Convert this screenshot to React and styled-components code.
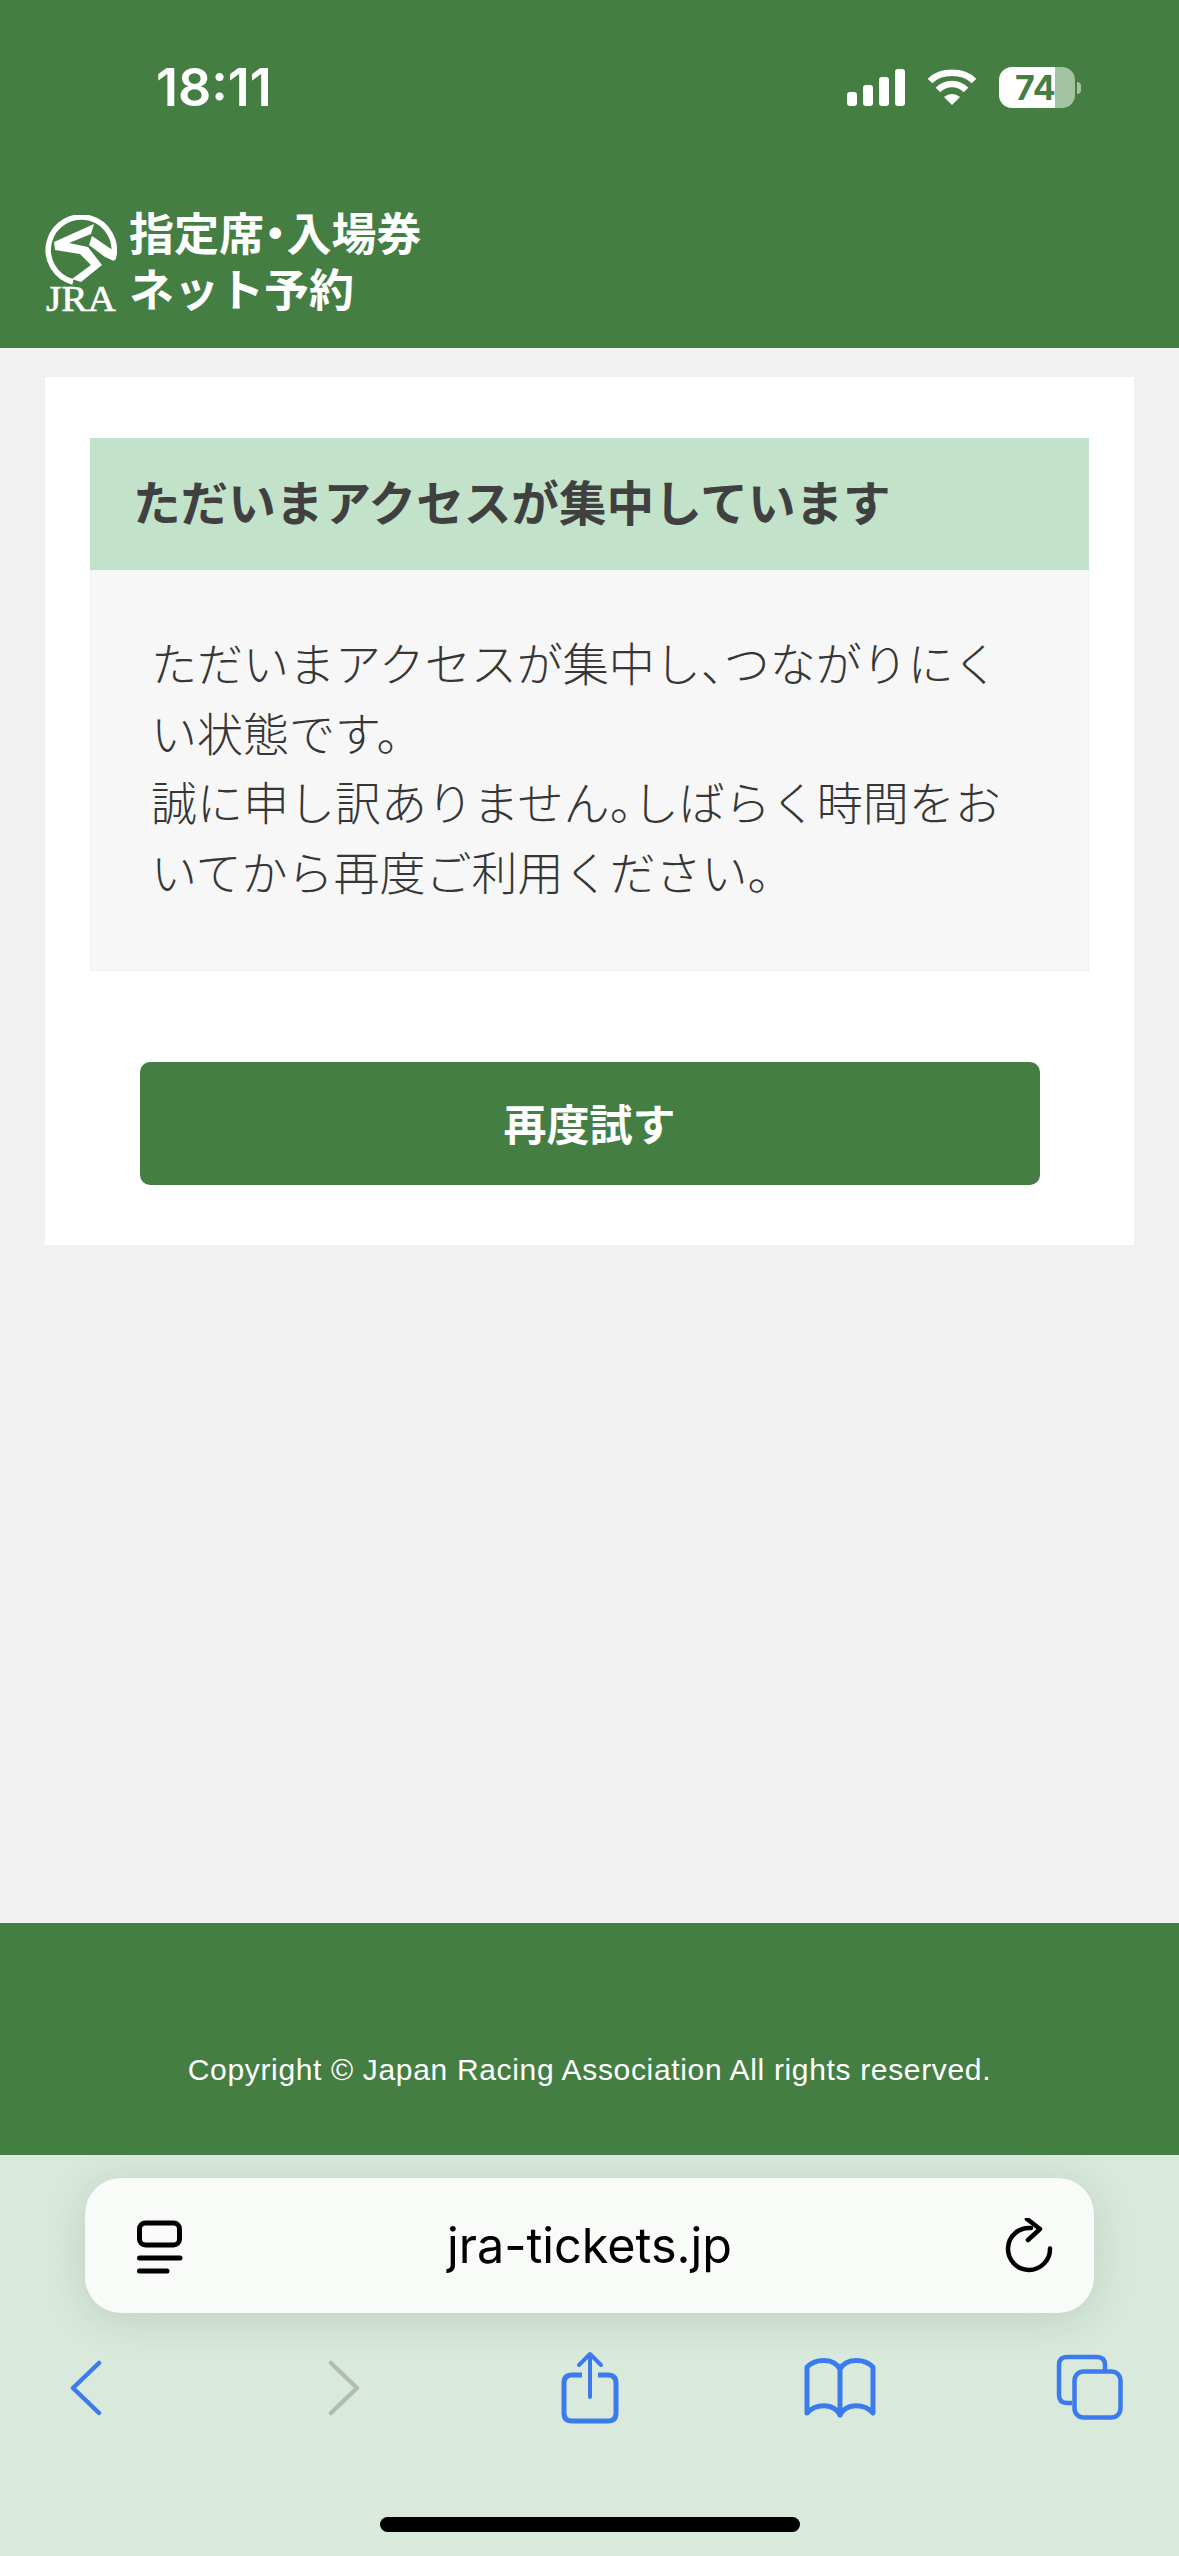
import styled, { createGlobalStyle } from 'styled-components';

const GlobalStyle = createGlobalStyle`
    html, body {
        margin: 0;
        padding: 0;
        background: #f1f1f1;
    }
    * {
        box-sizing: border-box;
    }
`;

const JP = `"Noto Sans CJK JP", "Noto Sans", sans-serif`;
const GREEN = '#447e43';
const BLUE = '#3b7bee';

const Logo = () => (
    <LogoBox width="72" height="104" viewBox="0 0 72 104">
        <path d="M68 44 A33 33 0 1 0 28 67" fill="none" stroke="#fff" strokeWidth="5.5" />
        <path d="M49 9 L9 27 L10 35 L35 39 L46 50 L27 64 L36 67 L57 50 L43 32 L24 28 L46 19 Z" fill="#fff" />
        <path d="M47 21 L72 38 L69 46 L60 42 L44 30 Z" fill="#fff" />
        <text x="1" y="96" fill="#fff" fontFamily="Liberation Serif" fontSize="35" textLength="70" lengthAdjust="spacingAndGlyphs" stroke="#fff" strokeWidth="0.6">JRA</text>
    </LogoBox>
);

const SignalIcon = () => (
    <svg width="58" height="37" viewBox="0 0 58 37" fill="#fff">
        <rect x="0" y="23" width="10" height="14" rx="3" />
        <rect x="16" y="16" width="10" height="21" rx="3" />
        <rect x="32" y="8" width="10" height="29" rx="3" />
        <rect x="48" y="0" width="10" height="37" rx="3" />
    </svg>
);

const WifiIcon = () => (
    <svg width="50" height="37" viewBox="0 0 50 37" fill="none" stroke="#fff" strokeWidth="6.5">
        <path d="M3 12 C14 1 36 1 47 12" />
        <path d="M11 21 C19 13 31 13 39 21" />
        <path d="M17 28 C22 24 28 24 33 28 L25 36 Z" fill="#fff" stroke="none" />
    </svg>
);

const TabsMini = () => (
    <svg width="48" height="56" viewBox="0 0 48 56" fill="none" stroke="#000" strokeWidth="5">
        <rect x="2.5" y="5" width="40" height="22" rx="6" />
        <path d="M2.5 40 H43 M2.5 53 H30" strokeLinecap="round" />
    </svg>
);

const ReloadIcon = () => (
    <svg width="48" height="56" viewBox="0 0 48 56" fill="none" stroke="#000" strokeWidth="4.5" strokeLinecap="round" strokeLinejoin="round">
        <path d="M26 10 A21 21 0 1 0 45 30.5" />
        <path d="M22 1 L35 11 L23 22" />
    </svg>
);

const BackIcon = ({ color, flip }) => (
    <svg width="32" height="56" viewBox="0 0 32 56" fill="none" stroke={color} strokeWidth="4.5" strokeLinecap="round" strokeLinejoin="round">
        <path d={flip ? 'M3 3 L29 28 L3 53' : 'M29 3 L3 28 L29 53'} />
    </svg>
);

const ShareIcon = () => (
    <svg width="58" height="74" viewBox="0 0 58 74" fill="none" stroke={BLUE} strokeWidth="5" strokeLinejoin="round">
        <path d="M21 24 H11 Q3 24 3 32 V62 Q3 70 11 70 H47 Q55 70 55 62 V32 Q55 24 47 24 H37" />
        <path d="M29 46 V3 M18 14 L29 3 L40 14" strokeWidth="4" strokeLinecap="round" />
    </svg>
);

const BookIcon = () => (
    <svg width="72" height="62" viewBox="0 0 72 62" fill="none" stroke={BLUE} strokeWidth="5" strokeLinecap="round" strokeLinejoin="round">
        <path d="M36 12 C30 1 12 1 3 10 V56 C12 46 30 46 36 58 C42 46 60 46 69 56 V10 C60 1 42 1 36 12 V58" />
    </svg>
);

const TabsIcon = () => (
    <svg width="68" height="68" viewBox="0 0 68 68" fill="none" stroke={BLUE} strokeWidth="4.5">
        <path d="M16 49 H11 Q3 49 3 41 V11 Q3 3 11 3 H41 Q49 3 49 11 V16" />
        <rect x="18.5" y="17.5" width="46" height="46" rx="9" />
    </svg>
);

export default function App() {
    return (
        <Screen>
            <GlobalStyle />
            <Header>
                <StatusBar>
                    <Clock>18:11</Clock>
                    <StatusIcons>
                        <SignalIcon />
                        <WifiIcon />
                        <Battery>
                            <BatteryLevel>74</BatteryLevel>
                            <BatteryCap />
                        </Battery>
                    </StatusIcons>
                </StatusBar>
                <Brand>
                    <Logo />
                    <BrandTitle>
                        指定席<Punct>・</Punct>入場券
                        <br />
                        ネット予約
                    </BrandTitle>
                </Brand>
            </Header>

            <Main>
                <Card>
                    <Notice>
                        <NoticeTitle>ただいまアクセスが集中しています</NoticeTitle>
                        <NoticeBody>
                            ただいまアクセスが集中し<Punct>、</Punct>つながりにくい状態です。
                            <br />
                            誠に申し訳ありません<Punct>。</Punct>しばらく時間をおいてから再度ご利用ください。
                        </NoticeBody>
                    </Notice>
                    <RetryButton type="button">再度試す</RetryButton>
                </Card>
            </Main>

            <Footer>Copyright © Japan Racing Association All rights reserved.</Footer>

            <Browser>
                <UrlBar>
                    <UrlLeft>
                        <TabsMini />
                    </UrlLeft>
                    <UrlText>jra-tickets.jp</UrlText>
                    <UrlRight>
                        <ReloadIcon />
                    </UrlRight>
                </UrlBar>
                <Toolbar>
                    <ToolSlot $nudge={-7}>
                        <BackIcon color={BLUE} />
                    </ToolSlot>
                    <ToolSlot $nudge={9}>
                        <BackIcon color="#b1bdb2" flip />
                    </ToolSlot>
                    <ToolSlot>
                        <ShareIcon />
                    </ToolSlot>
                    <ToolSlot>
                        <BookIcon />
                    </ToolSlot>
                    <ToolSlot>
                        <TabsIcon />
                    </ToolSlot>
                </Toolbar>
                <HomeBar />
            </Browser>
        </Screen>
    );
}

const Screen = styled.div`
    width: 1179px;
    height: 2556px;
    display: flex;
    flex-direction: column;
    overflow: hidden;
    background: #f1f1f1;
    font-family: ${JP};
`;

const Header = styled.header`
    height: 348px;
    flex: none;
    background: ${GREEN};
    color: #fff;
`;

const StatusBar = styled.div`
    height: 176px;
    padding: 61px 98px 0 156px;
    display: flex;
    justify-content: space-between;
    align-items: flex-start;
`;

const Clock = styled.div`
    font-family: Inter, sans-serif;
    font-size: 52px;
    line-height: 54px;
    font-weight: 600;
`;

const StatusIcons = styled.div`
    display: flex;
    align-items: center;
    gap: 22px;
    margin-top: 6px;
`;

const Battery = styled.div`
    display: flex;
    align-items: center;
    gap: 2px;
`;

const BatteryLevel = styled.div`
    width: 76px;
    height: 41px;
    border-radius: 13px;
    background: linear-gradient(90deg, #fff 0 74%, #a3c3a2 74% 100%);
    color: ${GREEN};
    font-family: Inter, sans-serif;
    font-size: 34px;
    line-height: 41px;
    font-weight: 700;
    padding-left: 16px;
`;

const BatteryCap = styled.div`
    width: 4px;
    height: 12px;
    border-radius: 0 4px 4px 0;
    background: #a3c3a2;
`;

const Brand = styled.div`
    display: flex;
    align-items: flex-start;
    gap: 12px;
    padding: 28px 0 0 45px;
`;

const LogoBox = styled.svg`
    flex: none;
    margin-top: 11px;
`;

const BrandTitle = styled.h1`
    margin: 0;
    font-size: 45px;
    line-height: 56px;
    font-weight: 700;
`;

const Punct = styled.span`
    font-feature-settings: 'halt';
`;

const Main = styled.main`
    flex: 1;
    padding: 29px 45px 0;
`;

const Card = styled.section`
    height: 868px;
    background: #fff;
    padding: 61px 45px 0;
`;

const Notice = styled.div`
    height: 533px;
    display: flex;
    flex-direction: column;
    background: #f7f7f7;
    border: 1px solid #efefef;
    border-top: none;
`;

const NoticeTitle = styled.h2`
    margin: 0 -1px;
    height: 132px;
    padding-left: 43px;
    background: #c3e2ca;
    color: #404040;
    font-size: 47.6px;
    font-weight: 700;
    line-height: 126px;
`;

const NoticeBody = styled.p`
    margin: 0;
    padding: 57px 70px 0 60px;
    color: #363636;
    font-size: 46px;
    line-height: 69.5px;
    font-weight: 300;
`;

const RetryButton = styled.button`
    display: block;
    width: 900px;
    height: 123px;
    margin: 91px auto 0;
    padding: 0 0 4px;
    border: none;
    border-radius: 10px;
    background: ${GREEN};
    color: #fff;
    font-family: ${JP};
    font-size: 43px;
    font-weight: 700;
`;

const Footer = styled.footer`
    height: 232px;
    flex: none;
    padding-top: 127px;
    text-align: center;
    background: ${GREEN};
    color: #fff;
    font-family: 'Liberation Sans', sans-serif;
    font-size: 30px;
    line-height: 40px;
    letter-spacing: 0.66px;
`;

const Browser = styled.div`
    height: 401px;
    flex: none;
    padding-top: 23px;
    display: flex;
    flex-direction: column;
    background: #d9eadd;
`;

const UrlBar = styled.div`
    width: 1009px;
    height: 135px;
    margin-left: 85px;
    padding: 0 41px;
    display: grid;
    grid-template-columns: 1fr auto 1fr;
    align-items: center;
    border-radius: 36px;
    background: #f8fbf7;
    box-shadow: 0 6px 40px rgba(70, 100, 75, 0.2);
`;

const UrlLeft = styled.div`
    display: flex;
    padding-left: 11px;
`;

const UrlRight = styled.div`
    display: flex;
    justify-content: flex-end;
`;

const UrlText = styled.div`
    font-family: Inter, sans-serif;
    font-size: 48.5px;
    color: #000;
`;

const Toolbar = styled.div`
    height: 107px;
    margin-top: 21px;
    display: grid;
    grid-template-columns: repeat(5, 250px);
    justify-content: center;
    align-items: center;
    justify-items: center;
`;

const ToolSlot = styled.div`
    display: flex;
    margin-left: ${p => p.$nudge || 0}px;
`;

const HomeBar = styled.div`
    width: 420px;
    height: 15px;
    margin: 76px auto 0;
    border-radius: 8px;
    background: #000;
`;
